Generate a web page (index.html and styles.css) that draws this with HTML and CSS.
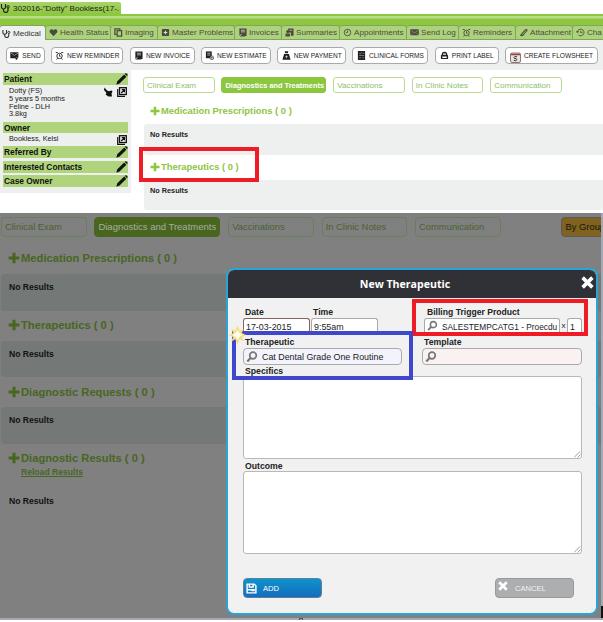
FILE: index.html
```html
<!DOCTYPE html>
<html lang="en">
<head>
<meta charset="utf-8">
<title>Patient record</title>
<link rel="stylesheet" href="styles.css">
</head>
<body>
<svg class="defs" width="0" height="0">
  <defs>
    <symbol id="steth" viewBox="0 0 10 10"><path d="M1 1v3a2 2 0 0 0 4 0V1M3 6.200v1a2 2 0 0 0 4.500 0V5" fill="none" stroke="currentColor" stroke-width="1.200"/><circle cx="7.600" cy="3.800" r="1.200" fill="none" stroke="currentColor"/></symbol>
    <symbol id="heart" viewBox="0 0 10 10"><path d="M5 9.200L1 5C-.5 2.500 3 0 5 2.400 7 0 10.500 2.500 9 5z" fill="currentColor"/></symbol>
    <symbol id="copy" viewBox="0 0 10 10"><path d="M3.500 3h5v6h-5zM2.500 7H1V1h5.500v1.500" fill="none" stroke="currentColor" stroke-width="1.400"/></symbol>
    <symbol id="plusbox" viewBox="0 0 10 10"><rect x="1" y="1" width="8" height="8" rx="1" fill="currentColor"/><path d="M5 3v4M3 5h4" stroke="#ddd" stroke-width="1.300"/></symbol>
    <symbol id="doc" viewBox="0 0 10 10"><path d="M1.500 .5h8v8l-2 1h-6z" fill="currentColor"/><path d="M3.300 2.500h4.400M3.300 4.300h4.400" stroke="#ddd" stroke-width=".8"/><path d="M1 9.500L4 7" stroke="#ddd"/></symbol>
    <symbol id="estimate" viewBox="0 0 10 10"><path d="M1 .5h6.500v7.500H1z" fill="currentColor"/><path d="M2.500 2.500h3.500M2.500 4.500h3.500" stroke="#ddd" stroke-width=".8"/><circle cx="7.600" cy="7.600" r="2" fill="#fff" stroke="currentColor" stroke-width=".7"/><path d="M7.600 6.500v2.200M6.500 7.600h2.200" stroke="currentColor" stroke-width=".6"/></symbol>
    <symbol id="money" viewBox="0 0 10 10"><path d="M3 .3h4L6.500 2.500h-3zM2.300 3.200h5.400L9.500 9.700h-9z" fill="currentColor"/><path d="M3.600 6.300h2.800M5 5v3" stroke="#ddd" stroke-width=".8"/></symbol>
    <symbol id="summary" viewBox="0 0 10 10"><path d="M3.500 .5h6v8h-3V5h-3zM.5 6h5v3.500h-5z" fill="currentColor"/><circle cx="3" cy="4" r="1.700" fill="currentColor"/><path d="M5 2.500h3" stroke="#ccc" stroke-width=".8"/></symbol>
    <symbol id="clock" viewBox="0 0 10 10"><circle cx="5" cy="5" r="3.600" fill="none" stroke="currentColor"/><path d="M5 2.800V5H3.200" fill="none" stroke="currentColor" stroke-width=".9"/></symbol>
    <symbol id="mail" viewBox="0 0 10 10"><rect x=".2" y="1.500" width="9.600" height="6.500" rx=".8" fill="currentColor"/><path d="M1 2.500l4 3 4-3M1 7.500L3.500 5M9 7.500L6.500 5" fill="none" stroke="#aaa" stroke-width=".6"/></symbol>
    <symbol id="sendmail" viewBox="0 0 10 10"><path d="M.3 1.500h9v5l-3.300 1.500H.3z" fill="currentColor"/><path d="M1 2.300l4 2.500 4-2.500" fill="none" stroke="#ddd" stroke-width=".6"/><path d="M5.500 8.500L9.800 6.200 7.500 10z" fill="currentColor"/></symbol>
    <symbol id="alarm" viewBox="0 0 10 10"><circle cx="5" cy="5.500" r="3" fill="none" stroke="currentColor"/><path d="M5 3.800v2h1.300M.8 1.700h2.200M7 1.700h2.200M2.800 8l-.9 1.500M7.200 8l.9 1.500" fill="none" stroke="currentColor"/></symbol>
    <symbol id="clip" viewBox="0 0 10 10"><path d="M1.500 8.500L7 2.200Q8.500 1 9 2.500L5 7.500Q3 9.500 2.200 7.500L6.500 3" fill="none" stroke="currentColor" stroke-width="1.200"/></symbol>
    <symbol id="history" viewBox="0 0 10 10"><path d="M1.500 4.500a3.700 3.700 0 1 1 1.200 3.200M0 3.500l1.500 1.800 1.800-1.500M5.300 3v2.200h1.700" fill="none" stroke="currentColor"/></symbol>
    <symbol id="form" viewBox="0 0 10 10"><path d="M1 0h8v10H1z" fill="currentColor"/><path d="M2.500 2.500l1 1 1.500-2M6 2.500h2M2.500 5h5.500M2.500 7.500h2M6 7.500h2" fill="none" stroke="#bbb" stroke-width=".6"/></symbol>
    <symbol id="print" viewBox="0 0 10 10"><path d="M2 4V3a3 2.300 0 0 1 6 0v1l1 1v4H1V5z" fill="currentColor"/><path d="M3.500 2.700h3v1.500h-3zM2.600 6.200h4.800v1.500H2.600z" fill="#fff"/></symbol>
    <symbol id="sheet" viewBox="0 0 11 11"><rect x=".5" y="1" width="10" height="9.500" rx="1.500" fill="#e8e4e0" stroke="#8d7774"/><path d="M.6 2.500h9.800" stroke="#a13e38" stroke-width="1.500"/><path d="M7 4.800Q4 4 4 5.500T6 6.700Q7.300 7.100 6.500 8.200T3.800 8.300" fill="none" stroke="#333"/></symbol>
    <symbol id="pencil" viewBox="0 0 12 12"><path d="M.3 11.700l1-3.500 6.900-6.600 2.200 2.200-6.900 6.700zM8.900 1l1-1 2 2-1 1z" fill="#111"/></symbol>
    <symbol id="open" viewBox="0 0 10 10"><rect x="2.500" y=".7" width="6.800" height="6.800" fill="none" stroke="#111" stroke-width="1.300"/><path d="M.7 2v7.300H8M4.200 6l3-3M4.700 2.600h2.700v2.700" fill="none" stroke="#111" stroke-width="1.200"/></symbol>
    <symbol id="pet" viewBox="0 0 10 10"><path d="M1.500 .5l2.500 3 2 .8L8.500 3.500 9.500 4.500 8.500 6.500 9 9.500H5.500L4 8.500 2.500 7.500l1-1.500L1 3z" fill="#111"/></symbol>
    <symbol id="plus" viewBox="0 0 12 12"><path d="M6 .8v10.400M.6 6h10.800" stroke="currentColor" stroke-width="3"/></symbol>
    <symbol id="mag" viewBox="0 0 12 12"><circle cx="7" cy="4.500" r="3.300" fill="none" stroke="#777" stroke-width="1.700"/><path d="M4.500 7L1.300 10.500" stroke="#777" stroke-width="2.200"/></symbol>
    <symbol id="cross" viewBox="0 0 12 12"><path d="M1.500 1.500l9 9M10.500 1.500l-9 9" stroke="#fff" stroke-width="3.300"/></symbol>
    <symbol id="save" viewBox="0 0 10 10"><path d="M1 1h6.500L9 2.500V9H1z" fill="none" stroke="#fff" stroke-width="1.300"/><path d="M3 1v2.700h3.500V1M1 6.200h5" fill="none" stroke="#fff" stroke-width="1.300"/><path d="M5 6.500h3" stroke="#fff" stroke-width="2"/></symbol>
  </defs>
</svg>
<div class="page">
  <div class="record">
    <div class="titlebar"><div class="titletab"><svg class="i10"><use href="#steth"/></svg><span>302016-"Dotty" Bookless(17-.</span></div></div>
    <div class="stripe"></div>
    <nav class="tabs">
      <div class="tab tab-on w46"><svg><use href="#steth"/></svg><span>Medical</span></div>
      <div class="tab w65"><svg><use href="#heart"/></svg><span>Health Status</span></div>
      <div class="tab w47"><svg><use href="#copy"/></svg><span>Imaging</span></div>
      <div class="tab w77"><svg><use href="#plusbox"/></svg><span>Master Problems</span></div>
      <div class="tab w47"><svg><use href="#doc"/></svg><span>Invoices</span></div>
      <div class="tab w58"><svg><use href="#summary"/></svg><span>Summaries</span></div>
      <div class="tab w67"><svg><use href="#clock"/></svg><span>Appointments</span></div>
      <div class="tab w52"><svg><use href="#mail"/></svg><span>Send Log</span></div>
      <div class="tab w57"><svg><use href="#alarm"/></svg><span>Reminders</span></div>
      <div class="tab w57"><svg><use href="#clip"/></svg><span>Attachment</span></div>
      <div class="tab w65"><svg><use href="#history"/></svg><span>Cha</span></div>
    </nav>
    <div class="toolbar">
      <div class="tool t1"><svg><use href="#sendmail"/></svg><span>SEND</span></div>
      <div class="tool t2"><svg><use href="#alarm"/></svg><span>NEW REMINDER</span></div>
      <div class="tool t3"><svg><use href="#doc"/></svg><span>NEW INVOICE</span></div>
      <div class="tool t4"><svg><use href="#estimate"/></svg><span>NEW ESTIMATE</span></div>
      <div class="tool t5"><svg><use href="#money"/></svg><span>NEW PAYMENT</span></div>
      <div class="tool t6"><svg><use href="#form"/></svg><span>CLINICAL FORMS</span></div>
      <div class="tool t7"><svg><use href="#print"/></svg><span>PRINT LABEL</span></div>
      <div class="tool t8"><svg class="sheet"><use href="#sheet"/></svg><span>CREATE FLOWSHEET</span></div>
    </div>
    <div class="body">
      <aside class="side">
        <div class="shead"><b>Patient</b><svg><use href="#pencil"/></svg></div>
        <div class="sinfo patient"><div><p>Dotty (FS)</p><p>5 years 5 months</p><p>Feline - DLH</p><p>3.8kg</p></div><div class="acts"><svg><use href="#pet"/></svg><svg><use href="#open"/></svg></div></div>
        <div class="shead owner"><b>Owner</b></div>
        <div class="sinfo ownerinfo"><p>Bookless, Kelsi</p><div class="acts"><svg><use href="#open"/></svg></div></div>
        <div class="shead ref"><b>Referred By</b><svg><use href="#pencil"/></svg></div>
        <div class="shead int"><b>Interested Contacts</b><svg><use href="#pencil"/></svg></div>
        <div class="shead"><b>Case Owner</b><svg><use href="#pencil"/></svg></div>
      </aside>
      <main class="main">
        <div class="pills">
          <div class="pill p1"><span>Clinical Exam</span></div>
          <div class="pill p2 pill-on"><span>Diagnostics and Treatments</span></div>
          <div class="pill p1"><span>Vaccinations</span></div>
          <div class="pill p1"><span>In Clinic Notes</span></div>
          <div class="pill p1"><span>Communication</span></div>
        </div>
        <div class="sec s1"><svg><use href="#plus"/></svg><span>Medication Prescriptions ( 0 )</span></div>
        <div class="band b1">No Results</div>
        <div class="sec s2"><svg><use href="#plus"/></svg><span>Therapeutics ( 0 )</span></div>
        <div class="band b2">No Results</div>
      </main>
    </div>
    <div class="mark mark-red mark-a"></div>
  </div>
  <div class="dim">
    <div class="dpills">
      <div class="dpill"><span>Clinical Exam</span></div>
      <div class="dpill dpill-on"><span>Diagnostics and Treatments</span></div>
      <div class="dpill"><span>Vaccinations</span></div>
      <div class="dpill"><span>In Clinic Notes</span></div>
      <div class="dpill"><span>Communication</span></div>
      <div class="dpill group"><span>By Group</span></div>
    </div>
    <div class="dsec"><svg><use href="#plus"/></svg><span>Medication Prescriptions ( 0 )</span></div>
    <div class="dband">No Results</div>
    <div class="dsec"><svg><use href="#plus"/></svg><span>Therapeutics ( 0 )</span></div>
    <div class="dband">No Results</div>
    <div class="dsec"><svg><use href="#plus"/></svg><span>Diagnostic Requests ( 0 )</span></div>
    <div class="dband">No Results</div>
    <div class="dsec"><svg><use href="#plus"/></svg><span>Diagnostic Results ( 0 )</span></div>
    <div class="reload">Reload Results</div>
    <div class="last">No Results</div>
    <div class="edge"></div>
    <div class="modal">
      <div class="mhead"><b>New Therapeutic</b><svg class="close"><use href="#cross"/></svg></div>
      <div class="mbody">
        <div class="row r1">
          <div class="fdate"><label>Date</label><div class="inp cut date">17-03-2015</div></div>
          <div class="ftime"><label>Time</label><div class="inp cut">9:55am</div></div>
          <div class="fbill"><label>Billing Trigger Product</label><div class="bill"><div class="inp cut prod"><svg><use href="#mag"/></svg><span>SALESTEMPCATG1 - Proecdu</span></div><i>x</i><div class="inp cut qty">1</div></div></div>
        </div>
        <div class="row r2">
          <div class="fther"><label>Therapeutic</label><div class="inp look"><svg><use href="#mag"/></svg><span>Cat Dental Grade One Routine</span></div></div>
          <div class="ftemp"><label>Template</label><div class="inp look pink"><svg><use href="#mag"/></svg></div></div>
        </div>
        <label class="lspec">Specifics</label>
        <div class="area"><svg class="grip" viewBox="0 0 7 7"><path d="M0 6.500L6 .5M3.500 6.500L6.500 3.500" stroke="#888" stroke-width=".8"/></svg></div>
        <label class="lout">Outcome</label>
        <div class="area"><svg class="grip" viewBox="0 0 7 7"><path d="M0 6.500L6 .5M3.500 6.500L6.500 3.500" stroke="#888" stroke-width=".8"/></svg></div>
        <div class="btns">
          <div class="btn add"><svg><use href="#save"/></svg><span>ADD</span></div>
          <div class="btn cancel"><svg><use href="#cross"/></svg><span>CANCEL</span></div>
        </div>
      </div>
    </div>
    <div class="mark mark-red mark-b"></div>
    <div class="mark mark-blue"></div>
    <svg class="spark" viewBox="0 0 16 18"><path d="M8 0l2 5 4-2-2 4 4 2-4 2 2 4-4-2-2 5-2-5-4 2 2-4-4-2 4-2-2-4 4 2z" fill="#f8dc80"/><path d="M8 4l1.800 3.200L13 9l-3.200 1.800L8 14l-1.800-3.200L3 9l3.200-1.800z" fill="#fffdf0"/></svg>
  </div>
  <div class="foot"><div class="knob"></div></div>
</div>
</body>
</html>
```
FILE: styles.css
```css
* { box-sizing: border-box; }
body { margin: 0; font-family: "Liberation Sans", Arial, sans-serif; background: #fff; color: #222; }
p { margin: 0; }
svg { flex: none; display: block; }
.defs { position: absolute; }
.page { width: 603px; height: 622px; overflow: hidden; position: relative; }
span, b, label { white-space: nowrap; }

.record { height: 213px; position: relative; overflow: hidden; }
.titlebar { height: 14px; padding-top: 2px; }
.titletab { width: 121px; height: 12px; display: flex; align-items: center; gap: 2px; background: linear-gradient(#a8d468, #8dc63f); font-size: 8.1px; border-radius: 0 2px 0 0; overflow: hidden; }
.i10 { width: 11px; height: 10px; }
.stripe { height: 11px; background: linear-gradient(#8dc63f 0 2px, #b9dc88 2px 4px, #8dc63f 5px); }
.tabs { height: 15px; display: flex; background: #8dc63f; }
.tab { flex: none; height: 15px; display: flex; align-items: center; gap: 2px; padding-left: 3px; background: #add27c; border: 1px solid #84a35c; border-left-width: 0; border-radius: 3px 3px 0 0; font-size: 8.1px; color: #4c4a3c; }
.tab svg { width: 9px; height: 9px; }
.tab-on { background: #eeefef; border-bottom: 0; color: #333; }
.w46 { width: 46px; padding-left: 2px; } .w65 { width: 65px; } .w47 { width: 47px; } .w77 { width: 77px; }
.w58 { width: 58px; } .w67 { width: 67px; } .w52 { width: 52px; } .w57 { width: 57px; }
.toolbar { height: 30px; background: #eeefef; display: flex; gap: 6.3px; padding: 7px 0 0 6px; }
.tool { flex: none; height: 17px; display: flex; align-items: center; justify-content: center; gap: 3px; background: #fff; border: 1px solid #aaa; border-radius: 4px; font-size: 6.6px; color: #222; }
.tool svg { width: 9px; height: 9px; }
.tool .sheet { width: 11px; height: 11px; margin-top: 3px; }
.t1 { width: 39px; } .t2 { width: 72px; } .t3 { width: 65px; } .t4 { width: 70px; } .t5 { width: 69px; } .t6 { width: 76px; } .t7 { width: 64px; } .t8 { width: 93px; }

.body { display: flex; height: 143px; }
.side { width: 131px; height: 123px; padding: 3px 3px 0; background: #eeefef; }
.shead { height: 12px; display: flex; align-items: center; justify-content: space-between; background: #b0d47c; padding-left: 1px; font-size: 8.4px; color: #111; }
.shead svg { width: 12px; height: 12px; }
.sinfo { display: flex; justify-content: space-between; padding: 2px 1px 0 6px; font-size: 7.3px; line-height: 7.8px; color: #222; }
.acts { display: flex; gap: 4px; }
.acts svg { width: 10px; height: 10px; }
.patient { height: 37px; }
.owner { height: 11px; }
.ownerinfo { height: 13px; padding-top: 2px; }
.ref { margin-bottom: 3px; }
.int { margin-bottom: 2px; }

.main { flex: 1; padding: 7px 0 0 12px; }
.pills { display: flex; gap: 6.8px; height: 16px; }
.pill { flex: none; width: 71.700px; border: 1px solid #b9dc90; border-radius: 3px; padding-left: 3px; display: flex; align-items: center; font-size: 8.1px; color: #8dc06a; }
.pill.p2 { width: 105px; }
.pill-on { background: #8dc63f; border-color: #8dc63f; color: #fff; font-weight: bold; font-size: 7.4px; }
.sec { display: flex; align-items: center; gap: 1px; padding-left: 7px; color: #8dc63f; font-weight: bold; font-size: 9.4px; }
.sec svg { width: 10px; height: 10px; }
.s1 { height: 31px; padding-top: 4px; }
.s2 { height: 25px; padding-bottom: 2px; }
.band { margin-left: 1px; background: #eeefef; border-radius: 3px 0 0 3px; padding-left: 6px; font-size: 7.3px; font-weight: bold; line-height: 22px; color: #222; }
.b1 { height: 31px; } .b2 { height: 30px; }

.mark { position: absolute; }
.mark-red { border: 4px solid #ee1c25; }
.mark-a { left: 139px; top: 147px; width: 120px; height: 35px; }
.mark-b { left: 412px; top: 86px; width: 176px; height: 37px; }
.mark-blue { left: 232px; top: 118px; width: 181px; height: 49px; border: 4px solid #3f48cc; }

.dim { position: relative; height: 405px; background: #808080; padding-top: 4px; overflow: hidden; }
.dpills { display: flex; gap: 7.9px; height: 20px; padding-left: 1px; }
.dpill { flex: none; width: 85.5px; border: 1px solid #68805a; border-radius: 4px; padding: 0 0 2px 3px; display: flex; align-items: center; font-size: 9.4px; color: #49632f; }
.dpill-on { width: 126px; background: #48661f; border-color: #48661f; color: #a8ad9f; font-size: 9.5px; }
.group { width: 70px; margin-left: 53px; background: #806320; border-color: #5b5b55; color: #17140a; }
.dsec { height: 37px; padding: 5px 0 0 8px; display: flex; align-items: center; gap: 1px; color: #48661f; font-weight: bold; font-size: 11.2px; }
.dsec svg { width: 12px; height: 12px; }
.dband + .dsec { height: 30px; padding-top: 0; padding-bottom: 1px; }
.dband { height: 36.600px; margin-left: 1px; padding-left: 8px; background: #747876; border-radius: 4px 0 0 4px; color: #111; font-size: 8.6px; font-weight: bold; line-height: 27px; }
.reload { margin: -8px 0 0 21px; height: 12px; line-height: 12px; font-size: 8.6px; font-weight: bold; text-decoration: underline; color: #48661f; }
.last { margin: 17px 0 0 9px; height: 12px; line-height: 12px; font-size: 8.6px; font-weight: bold; color: #111; }
.edge { position: absolute; right: 0; top: 0; bottom: 0; width: 2px; background: linear-gradient(#a3a8b5 0 393px, #111 393px); }

.modal { position: absolute; left: 226px; top: 55px; width: 372px; height: 347px; border: 2px solid #2aa3d8; border-radius: 8px; background: #f1f1f1; overflow: hidden; color: #222; }
.mhead { height: 28px; background: #303136; display: flex; align-items: center; justify-content: center; color: #fff; font-family: "Open Sans", sans-serif; font-size: 10.6px; position: relative; padding-right: 14px; }
.close { position: absolute; right: 2px; top: 6px; width: 13px; height: 13px; }
.mbody { padding: 9px 14px 0 15px; font-size: 8.9px; }
.mbody label { display: block; height: 11px; line-height: 11px; font-size: 8.7px; font-weight: bold; padding-left: 2px; }
.row { display: flex; }
.r1 { height: 30px; }
.inp { border: 1px solid #aaa; border-radius: 4px; background: #fff; display: flex; align-items: center; height: 17px; }
.cut { height: 14px; border-bottom: 0; border-radius: 3px 3px 0 0; padding: 2px 0 0 2px; }
.fdate { width: 67px; margin-right: 1px; }
.date { border-color: #85605f; }
.ftime { width: 67px; }
.fbill { margin-left: 46px; }
.fbill label { padding-left: 3px; font-size: 8.6px; }
.bill { display: flex; }
.bill i { font-style: normal; font-size: 8px; width: 7px; text-align: center; line-height: 15px; }
.prod { width: 136px; padding: 0 0 0 2px; gap: 4px; }
.prod svg { width: 11px; height: 12px; }
.prod span { padding-top: 3px; font-size: 8.3px; }
.qty { width: 15px; }
.r2 { height: 28px; }
.fther { width: 159px; }
.ftemp { width: 160px; margin-left: 20px; }
.look { padding-left: 2px; gap: 4px; background: #f2f3fb; }
.look svg { width: 12px; height: 12px; }
.pink { background: #faf1f1; }
.mbody .lspec { height: 11px; line-height: 13px; }
.area { height: 83px; background: #fff; border: 1px solid #b8b8b8; border-radius: 3px; display: flex; align-items: flex-end; justify-content: flex-end; }
.grip { width: 7px; height: 7px; }
.mbody .lout { height: 12px; line-height: 14px; }
.btns { display: flex; justify-content: space-between; padding-right: 8px; margin-top: 24px; }
.btn { width: 79px; height: 20px; border-radius: 4px; border: 1px solid #5f7f98; display: flex; align-items: center; color: #fff; font-size: 7.6px; padding-left: 2px; gap: 6px; }
.btn svg { width: 11px; height: 11px; }
.add { background: linear-gradient(#0d94cc, #166cbd); }
.cancel { background: #acaeb0; border-color: #999; color: #f3f3f3; gap: 7px; }
.cancel svg { width: 10px; height: 10px; margin-bottom: 4px; }
.spark { position: absolute; left: 229px; top: 112px; width: 17px; height: 20px; }
.foot { height: 2px; background: #a3a8b5; display: flex; padding-left: 299px; }
.knob { width: 4px; height: 2px; border: 1px solid #555; border-bottom: 0; }
```
